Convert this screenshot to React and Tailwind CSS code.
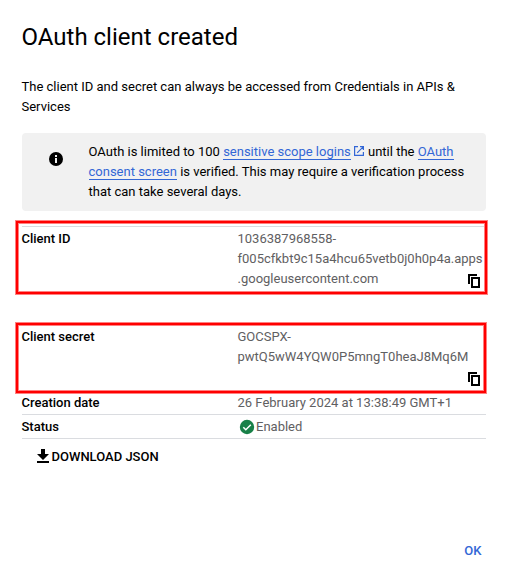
import React from "react";

function CopyIcon() {
  return (
    <svg className="size-4 shrink-0" viewBox="0 0 16 16" fill="none" stroke="#000" strokeWidth="2">
      <path d="M3 11V2h8" />
      <path d="M6 5h7v9H6z" />
    </svg>
  );
}

function InfoIcon() {
  return (
    <svg className="size-4" viewBox="0 0 16 16">
      <circle cx="8" cy="8" r="7" fill="#000" />
      <path d="M7 4h2v2H7zM7 7h2v5H7z" fill="#f1f1f1" />
    </svg>
  );
}

function ExternalIcon() {
  return (
    <svg className="inline-block size-3 ml-[2.5px] -mr-[0.5px] align-[-1px]" viewBox="0 0 12 12" fill="none" stroke="#3367d6" strokeWidth="1.2">
      <path d="M5 1.6H1.6v8.8h8.8V7M7 1.6h3.4V5M10.2 1.8L4.2 7.8" />
    </svg>
  );
}

function CheckIcon() {
  return (
    <svg className="size-4" viewBox="0 0 16 16">
      <circle cx="8" cy="8" r="7.2" fill="#188048" />
      <path d="M4.3 8.2l2.5 2.5 5-5" fill="none" stroke="#fff" strokeWidth="1.5" />
    </svg>
  );
}

function DownloadIcon() {
  return (
    <svg className="mb-0.5 size-[14px]" viewBox="0 0 14 14" fill="#000">
      <path d="M5 0h4v5h4L7 11 1 5h4zM1 12h12v2H1z" />
    </svg>
  );
}

function Row({ label, className, children }) {
  return (
    <div className={"flex border-t border-[#dadce0] pt-[2px] " + className}>
      <div className="w-[216px] shrink-0 font-medium text-black">{label}</div>
      <div className="grow text-[#5f6062]">{children}</div>
    </div>
  );
}

export default function App() {
  const link = "text-[#3367d6] border-b border-[#3367d6]";
  return (
    <div className="relative flex h-[583px] w-[508px] flex-col bg-white pr-[22px] pl-[21.5px] pt-[21px] font-[Roboto,sans-serif] text-[13px] leading-5 text-black">
      <h1 className="text-2xl leading-8 font-normal">OAuth client created</h1>
      <p className="mt-6 whitespace-nowrap">
        The client ID and secret can always be accessed from Credentials in APIs &amp;
        <br />
        Services
      </p>
      <div className="mt-4 flex h-[78px] w-[464px] shrink-0 rounded bg-[#f1f1f1] pt-[9px]">
        <div className="w-[67px] shrink-0 pt-[9px] pl-[26.5px]">
          <InfoIcon />
        </div>
        <p className="whitespace-nowrap">
          OAuth is limited to 100 <a className={link}>sensitive scope logins</a>
          <ExternalIcon /> until the <a className={link}>OAuth</a>
          <br />
          <a className={link}>consent screen</a> is verified. This may require a verification process
          <br />
          that can take several days.
        </p>
      </div>
      <div className="mt-[15px] w-[464px]">
        <Row label="Client ID" className="h-[98px]">
          <div className="flex items-end">
            <div className="w-[228.5px] whitespace-nowrap">
              1036387968558-
              <br />
              f005cfkbt9c15a4hcu65vetb0j0h0p4a.apps
              <br />
              .googleusercontent.com
            </div>
            <div className="h-5 pt-1">
              <CopyIcon />
            </div>
          </div>
        </Row>
        <Row label="Client secret" className="h-[66px]">
          <div className="flex items-end">
            <div className="h-[60px] w-[228.5px] whitespace-nowrap">
              GOCSPX-
              <br />
              pwtQ5wW4YQW0P5mngT0heaJ8Mq6M
            </div>
            <div className="h-5 pt-1">
              <CopyIcon />
            </div>
          </div>
        </Row>
        <Row label="Creation date" className="h-6">
          26 February 2024 at 13:38:49 GMT+1
        </Row>
        <Row label="Status" className="h-[25px] border-b">
          <div className="flex items-center gap-px pl-[1.5px]">
            <CheckIcon />
            Enabled
          </div>
        </Row>
      </div>
      <div className="mt-2 ml-[14.5px] flex items-center gap-[1.5px] font-medium">
        <DownloadIcon />
        DOWNLOAD JSON
      </div>
      <div className="mt-[74px] mr-[4.5px] text-right font-medium text-[#3367d6]">OK</div>

      <div className="absolute top-[221px] left-[16px] h-[73px] w-[471px] border-2 border-[#ff0000] shadow-[0_0_0_1px_#ff8080,inset_0_0_0_1px_#ff8080]" />
      <div className="absolute top-[323px] left-[16px] h-[70px] w-[470px] border-2 border-[#ff0000] shadow-[0_0_0_1px_#ff8080,inset_0_0_0_1px_#ff8080]" />
    </div>
  );
}
